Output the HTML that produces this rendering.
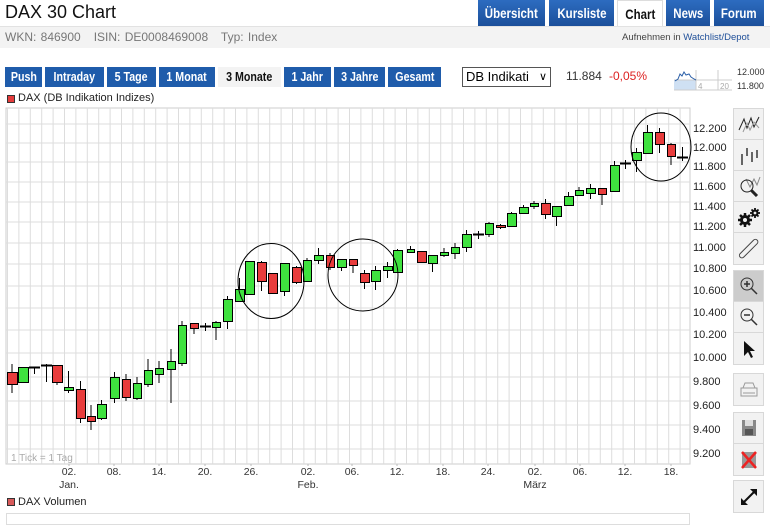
<!DOCTYPE html>
<html><head><meta charset="utf-8"><style>
*{margin:0;padding:0;box-sizing:border-box}
body{width:770px;height:522px;background:#fff;font-family:"Liberation Sans",sans-serif;position:relative;overflow:hidden}
.a{position:absolute}
.tab{position:absolute;top:0;height:26px;background:linear-gradient(#2d6cc0,#1b4f9a);color:#fff;font:bold 14px "Liberation Sans Narrow","Liberation Sans",sans-serif;text-align:center;line-height:26px;white-space:nowrap}
.btn{position:absolute;top:67px;height:20px;background:#1f5cab;color:#fff;font:bold 13px "Liberation Sans Narrow","Liberation Sans",sans-serif;text-align:center;line-height:20px;white-space:nowrap}
.tab span,.btn span{display:inline-block;transform:scaleX(0.82)}
.tb{position:absolute;left:733px;width:31px;background:#f2f2f2;border:1px solid #d8d8d8}
.tb div{height:31px;border-bottom:1px solid #d8d8d8;display:flex;align-items:center;justify-content:center}
.tb div:last-child{border-bottom:none}
</style></head><body>
<div class="a" style="left:5px;top:2px;font-size:18px;color:#111">DAX 30 Chart</div>
<div class="tab" style="left:478px;width:67px"><span>Übersicht</span></div>
<div class="tab" style="left:549px;width:65px"><span>Kursliste</span></div>
<div class="tab" style="left:617px;width:46px;background:#fff;color:#111;border:1px solid #ddd;border-bottom:none"><span>Chart</span></div>
<div class="tab" style="left:666px;width:44px"><span>News</span></div>
<div class="tab" style="left:714px;width:50px"><span>Forum</span></div>
<div class="a" style="left:0;top:26px;width:770px;height:22px;background:#f3f3f3;border-top:1px solid #e2e2e2"></div>
<div class="a" style="left:5px;top:30px;font-size:12px;color:#777;word-spacing:1px">WKN: 846900&nbsp;&nbsp; ISIN: DE0008469008&nbsp;&nbsp; Typ: Index</div>
<div class="a" style="left:622px;top:32px;font-size:9.5px;color:#444">Aufnehmen in <span style="color:#1f4f99">Watchlist/Depot</span></div>
<div class="btn" style="left:5px;width:37px"><span>Push</span></div>
<div class="btn" style="left:45px;width:59px"><span>Intraday</span></div>
<div class="btn" style="left:107px;width:49px"><span>5 Tage</span></div>
<div class="btn" style="left:159px;width:56px"><span>1 Monat</span></div>
<div class="btn" style="left:218px;width:63px;background:#f3f3f3;color:#111"><span>3 Monate</span></div>
<div class="btn" style="left:284px;width:47px"><span>1 Jahr</span></div>
<div class="btn" style="left:334px;width:51px"><span>3 Jahre</span></div>
<div class="btn" style="left:388px;width:53px"><span>Gesamt</span></div>
<div class="a" style="left:462px;top:67px;width:89px;height:20px;border:1px solid #555;font-size:13px;line-height:18px;padding-left:3px">DB Indikati<span style="position:absolute;right:3px;top:0;font-size:11px">&#x2228;</span></div>
<div class="a" style="left:566px;top:69px;font-size:12px;color:#333">11.884</div>
<div class="a" style="left:609px;top:69px;font-size:12px;color:#d22">-0,05%</div>
<svg class="a" style="left:672px;top:66px" width="98" height="26">
<rect x="2" y="14" width="22" height="10" fill="#cfe0f3"/>
<path d="M2 24H60M2 14H60M24 4V24M46 4V24" stroke="#ccc" fill="none"/>
<path d="M3 15L6 13 8 8 10 10 12 6 14 9 17 8 19 11 22 13 24 14" stroke="#2b5fa8" fill="none"/>
<text x="26" y="23" font-size="8" fill="#aaa">4</text><text x="48" y="23" font-size="8" fill="#aaa">20</text>
<text x="65" y="9" font-size="9" fill="#333">12.000</text><text x="65" y="23" font-size="9" fill="#333">11.800</text>
</svg>
<div class="a" style="left:7px;top:95px;width:8px;height:8px;background:#e53b3b;border:1px solid #333"></div>
<div class="a" style="left:18px;top:92px;font-size:11px;color:#222">DAX (DB Indikation Indizes)</div>
<svg class="a" id="ch" style="left:0;top:0" width="732" height="522"></svg>
<div class="a" style="left:7px;top:498px;width:8px;height:8px;background:#d85a5a;border:1px solid #333"></div>
<div class="a" style="left:18px;top:496px;font-size:11px;color:#222">DAX Volumen</div>
<div class="a" style="left:6px;top:513px;width:684px;height:12px;border:1px solid #ddd"></div>

<div class="tb" style="top:108px">
<div><svg width="24" height="20"><path d="M2 16L7 5 10 14 14 4 17 13 22 3" stroke="#222" fill="none"/><path d="M6 18L10 9 13 16 17 8 22 14" stroke="#999" fill="none"/></svg></div>
<div><svg width="24" height="22"><path d="M5 10V21M10 4V12M15 8V18M20 6V14" stroke="#666" stroke-width="2"/></svg></div>
<div><svg width="24" height="22"><path d="M9 4L13 12 17 4 20 10 23 2" stroke="#888" fill="none"/><circle cx="10" cy="11" r="6" stroke="#222" fill="none"/><path d="M14 15L20 21" stroke="#222" stroke-width="3"/></svg></div>
<div><svg width="24" height="22"><g fill="#111"><circle cx="8" cy="14" r="5"/><circle cx="18" cy="7" r="3.5"/></g><g stroke="#111" stroke-width="2.5"><path d="M8 7V21M1 14H15M3 9L13 19M13 9L3 19"/><path d="M18 2V12M13 7H23M14.5 3.5L21.5 10.5M21.5 3.5L14.5 10.5" stroke-width="1.8"/></g><circle cx="8" cy="14" r="2" fill="#f2f2f2"/><circle cx="18" cy="7" r="1.4" fill="#f2f2f2"/></svg></div>
<div><svg width="24" height="22"><rect x="9" y="-1" width="5" height="24" rx="2.5" transform="rotate(45 12 11)" stroke="#444" fill="none"/></svg></div>
</div>
<div class="tb" style="top:270px">
<div style="background:#ccc"><svg width="22" height="22"><circle cx="9" cy="9" r="6" stroke="#333" fill="none"/><path d="M6 9H12M9 6V12M13 13L19 19" stroke="#333" stroke-width="1.5"/></svg></div>
<div><svg width="22" height="22"><circle cx="9" cy="9" r="6" stroke="#333" fill="none"/><path d="M6 9H12M13 13L19 19" stroke="#333" stroke-width="1.5"/></svg></div>
<div><svg width="22" height="22"><path d="M6 3V18L10 14 13 20 15 19 12 13 17 13Z" fill="#111"/></svg></div>
</div>
<div class="tb" style="top:373px"><div><svg width="22" height="22"><path d="M7 4H15L17 9H5ZM3 9H19V17H3ZM5 14H17" stroke="#999" fill="none"/></svg></div></div>
<div class="tb" style="top:412px">
<div><svg width="22" height="22"><rect x="4" y="3" width="14" height="16" fill="#888"/><rect x="7" y="3" width="8" height="6" fill="#ddd"/><rect x="7" y="12" width="8" height="6" fill="#555"/></svg></div>
<div><svg width="22" height="22"><rect x="4" y="3" width="14" height="16" fill="#999"/><path d="M4 3L18 19M18 3L4 19" stroke="#e22" stroke-width="2.5"/></svg></div>
</div>
<div class="tb" style="top:480px"><div><svg width="22" height="22"><path d="M5 17L17 5" stroke="#111" stroke-width="2"/><path d="M3 19V12L10 19ZM19 3V10L12 3Z" fill="#111"/></svg></div></div>

<script>
var s='';
var X0=6,X1=690,Y0=108,Y1=464;
s+='<rect x="'+X0+'" y="'+Y0+'" width="'+(X1-X0)+'" height="'+(Y1-Y0)+'" fill="#fff" stroke="#ccc"/>';
for(var x=X0+1.5;x<X1;x+=11.4)s+='<line x1="'+x+'" y1="'+Y0+'" x2="'+x+'" y2="'+Y1+'" stroke="#ddd"/>';
var L=[[12.200,128],[12.000,147],[11.800,166],[11.600,186],[11.400,206],[11.200,226],[11.000,247],[10.800,268],[10.600,290],[10.400,312],[10.200,334],[10.000,357],[9.800,381],[9.600,405],[9.400,429],[9.200,453]];
L.forEach(function(l){var y=l[1]-4;s+='<line x1="'+X0+'" y1="'+y+'" x2="'+X1+'" y2="'+y+'" stroke="#ddd"/>';s+='<text x="693" y="'+(l[1]+4)+'" font-size="11" fill="#222">'+l[0].toFixed(3)+'</text>';});
var C=[[7,17,372,384,364,393,'r'],[18,28,367,382,367,382,'g'],[34,0,367,367,367,374,'x'],[46,0,365,365,364,382,'x'],[52,62,365,382,365,385,'r'],[64,73,387,390,371,393,'g'],[76,85,389,418,381,423,'r'],[87,95,416,421,405,430,'r'],[97,106,404,418,400,420,'g'],[110,119,377,398,372,403,'g'],[122,130,379,397,374,401,'r'],[133,141,383,398,377,400,'g'],[144,152,370,384,359,387,'g'],[155,163,368,374,361,383,'g'],[167,175,361,369,349,403,'g'],[178,186,325,363,321,366,'g'],[190,198,323,328,323,334,'r'],[205,0,326,326,323,331,'x'],[212,220,322,327,321,340,'g'],[223,232,299,321,296,329,'g'],[235,244,289,301,278,302,'g'],[245,254,261,294,261,294,'g'],[257,266,262,281,261,291,'r'],[268,277,273,293,273,294,'r'],[280,289,263,291,263,296,'g'],[292,301,267,282,266,284,'r'],[303,311,260,281,258,281,'g'],[314,323,255,260,248,264,'g'],[326,334,255,267,253,270,'r'],[337,346,259,267,259,271,'g'],[349,357,259,265,259,273,'r'],[360,369,273,282,270,289,'r'],[371,380,270,281,266,290,'g'],[383,392,266,270,262,278,'g'],[393,402,250,272,249,272,'g'],[407,414,249,252,246,253,'g'],[417,426,251,262,251,263,'r'],[428,437,255,263,255,272,'g'],[440,448,252,255,248,257,'g'],[451,459,247,253,243,259,'g'],[462,471,234,247,230,252,'g'],[478,0,234,234,231,239,'x'],[485,493,223,234,222,237,'g'],[496,505,225,227,224,229,'r'],[507,516,213,226,212,227,'g'],[519,528,207,213,205,214,'g'],[530,538,203,206,201,209,'g'],[541,550,203,214,199,219,'r'],[552,561,206,216,206,226,'g'],[564,573,196,205,192,205,'g'],[575,583,190,195,187,196,'g'],[586,595,188,193,184,199,'g'],[598,606,188,194,188,205,'r'],[610,619,165,191,161,191,'g'],[625,0,163,163,160,169,'x'],[632,641,152,160,148,172,'g'],[643,652,132,153,125,153,'g'],[655,664,132,144,128,153,'r'],[667,675,144,156,143,165,'r'],[682,0,157,157,147,161,'x']];
C.forEach(function(c){
 if(c[6]=='x'){s+='<line x1="'+(c[0]+.5)+'" y1="'+c[4]+'" x2="'+(c[0]+.5)+'" y2="'+c[5]+'" stroke="#000"/>';s+='<line x1="'+(c[0]-5)+'" y1="'+(c[2]+.5)+'" x2="'+(c[0]+6)+'" y2="'+(c[2]+.5)+'" stroke="#000" stroke-width="2"/>';return;}
 var m=(c[0]+c[1])/2;
 s+='<line x1="'+m+'" y1="'+c[4]+'" x2="'+m+'" y2="'+c[5]+'" stroke="#000"/>';
 s+='<rect x="'+(c[0]+.5)+'" y="'+(c[2]+.5)+'" width="'+(c[1]-c[0])+'" height="'+Math.max(2,c[3]-c[2])+'" fill="'+(c[6]=='g'?'#3fe23f':'#e83c3c')+'" stroke="#000"/>';
});
s+='<ellipse cx="271" cy="281" rx="33" ry="37.5" fill="none" stroke="#000"/><ellipse cx="363" cy="275" rx="35" ry="36" fill="none" stroke="#000"/><ellipse cx="661" cy="147" rx="30" ry="34" fill="none" stroke="#000"/>';
s+='<text x="11" y="461" font-size="10" fill="#aaa">1 Tick = 1 Tag</text>';
var D=[['02.',69,'Jan.'],['08.',114],['14.',159],['20.',205],['26.',251],['02.',308,'Feb.'],['06.',352],['12.',397],['18.',443],['24.',488],['02.',535,'März'],['06.',580],['12.',625],['18.',671]];
D.forEach(function(d){s+='<line x1="'+d[1]+'" y1="'+Y1+'" x2="'+d[1]+'" y2="'+(Y1+2)+'" stroke="#bbb"/><text x="'+d[1]+'" y="475" font-size="10.5" fill="#333" text-anchor="middle">'+d[0]+'</text>';if(d[2])s+='<text x="'+d[1]+'" y="488" font-size="10.5" fill="#333" text-anchor="middle">'+d[2]+'</text>';});
document.getElementById('ch').innerHTML=s;
</script>
</body></html>
